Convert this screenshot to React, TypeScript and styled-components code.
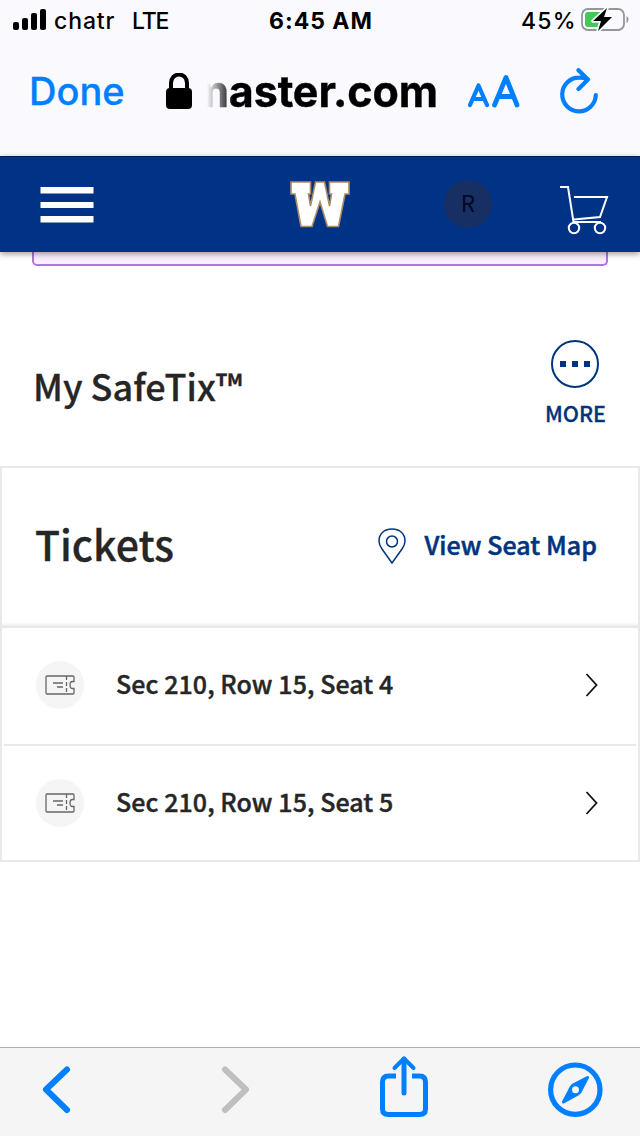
import styled, { createGlobalStyle } from "styled-components";

const GlobalStyle = createGlobalStyle`
    *{
        box-sizing:border-box;
    }
    body{
        margin:0;
        background-color:#fff;
        color:#262626;
        font-family:"Noto Sans CJK SC", "Noto Sans", sans-serif;
    }
    svg{
        display:block;
        flex-shrink:0;
    }
    button{
        border:0;
        padding:0;
        background:none;
        font:inherit;
        color:inherit;
    }
`
const Phone = styled.div`
    width:640px;
    height:1136px;
    display:flex;
    flex-direction:column;
    overflow:hidden;
`
const BrowserTop = styled.header`
    height:156px;
    flex-shrink:0;
    background-color:#faf9fd;
    color:#000;
    font-family:Inter, sans-serif;
`
const StatusBar = styled.div`
    height:40px;
    display:grid;
    grid-template-columns:1fr auto 1fr;
    align-items:center;
    padding:0 11px 2px 13px;
    font-size:23px;
    line-height:38px;
`
const StatusGroup = styled.div<{ $end?: boolean }>`
    display:flex;
    align-items:center;
    justify-content:${props => props.$end ? "flex-end" : "flex-start"};
`
const StatusText = styled.span<{ $width: number; $left?: number; $spacing?: number }>`
    width:${props => props.$width}px;
    margin-left:${props => props.$left ?? 0}px;
    padding-top:2px;
    white-space:nowrap;
    font-weight:500;
    letter-spacing:${props => props.$spacing ?? 0}px;
`
const Clock = styled.strong`
    padding-top:2px;
    font-weight:700;
    letter-spacing:1px;
`
const AddressBar = styled.div`
    height:104px;
    display:flex;
    align-items:center;
    padding:0 40px 2px 29px;
`
const Done = styled.button`
    width:96px;
    margin-right:41px;
    color:#007fff;
    font-size:38px;
    line-height:44px;
    font-weight:500;
    text-align:left;
    white-space:nowrap;
    -webkit-text-stroke:0.3px;
`
//주소가 길어서 왼쪽이 흐려지면서 잘림
const Domain = styled.div`
    width:231px;
    margin-left:15px;
    display:flex;
    justify-content:flex-end;
    overflow:hidden;
    font-size:43px;
    line-height:52px;
    font-weight:700;
    letter-spacing:-0.1px;
    white-space:nowrap;
    -webkit-text-stroke:0.4px;
    mask-image:linear-gradient(to right, transparent 0, #000 26px);
`
const AddressButton = styled.button<{ $left: number }>`
    margin-left:${props => props.$left}px;
`
const TeamBar = styled.nav`
    position:relative;
    z-index:1;
    height:96px;
    flex-shrink:0;
    display:flex;
    align-items:center;
    padding:0 31px 0 40px;
    background-color:#003385;
    border-top:1px solid #001f5c;
    box-shadow:0 2px 6px rgba(0,0,0,0.4);
`
const MenuButton = styled.button`
    margin-right:196px;
`
const CartButton = styled.button`
    margin-top:11px;
`
const Avatar = styled.div`
    width:48px;
    height:48px;
    margin:0 67px 2px 94px;
    border-radius:50%;
    background-color:#172f63;
    color:#00091c;
    font-size:22.5px;
    line-height:44px;
    text-align:center;
`
const Banner = styled.div`
    height:14px;
    flex-shrink:0;
    margin:0 32px;
    border:2px solid #af76df;
    border-top:0;
    border-radius:0 0 5px 5px;
    background-color:#faf0fd;
`
const SafeTix = styled.section`
    height:200px;
    flex-shrink:0;
    display:flex;
    justify-content:space-between;
    padding:74px 34px 0 32px;
`
const Heading = styled.h1`
    margin:19px 0 0 1px;
    font-size:36px;
    line-height:52px;
    font-weight:500;
    -webkit-text-stroke:0.3px;
`
const More = styled.button`
    display:flex;
    flex-direction:column;
    align-items:center;
    align-self:flex-start;
    color:#00347d;
    font-size:21.5px;
    line-height:32px;
    font-weight:500;
    -webkit-text-stroke:0.3px;
`
const MoreLabel = styled.span`
    margin-top:9px;
`
const TicketCard = styled.section`
    height:396px;
    flex-shrink:0;
    border:2px solid #e9e9e9;
`
const CardHeader = styled.div`
    height:160px;
    display:flex;
    align-items:center;
    justify-content:space-between;
    padding:0 41px 4px 33px;
    background:linear-gradient(to top, #e8e8e8 0, #e8e8e8 2px, #f3f3f3 3px, #fff 6px);
`
const CardTitle = styled.h2`
    margin:0 0 7px;
    font-size:41px;
    line-height:60px;
    font-weight:500;
    -webkit-text-stroke:0.3px;
`
const SeatMap = styled.button`
    display:flex;
    align-items:center;
    gap:18px;
    color:#00347d;
    font-size:25px;
    line-height:36px;
    font-weight:500;
    -webkit-text-stroke:0.5px;
`
const SeatMapLabel = styled.span`
    margin-bottom:4px;
    letter-spacing:0.05px;
`
const TicketList = styled.ul`
    margin:0 2px;
    padding:0;
    list-style:none;
`
const Ticket = styled.li`
    height:116px;
    display:flex;
    align-items:center;
    padding:0 38px 2px 32px;
    font-size:25px;
    line-height:40px;
    font-weight:500;
    &:not(:last-child){
        height:118px;
        border-bottom:2px solid #e8e8e8;
    }
`
const TicketIcon = styled.div`
    width:48px;
    height:48px;
    display:flex;
    align-items:center;
    justify-content:center;
    border-radius:50%;
    background-color:#f5f5f5;
`
const SeatName = styled.span`
    flex:1;
    margin:0 0 4px 32px;
    letter-spacing:0.07px;
    -webkit-text-stroke:0.4px;
`
const BrowserBottom = styled.footer`
    height:89px;
    flex-shrink:0;
    display:flex;
    margin-top:auto;
    padding-top:7px;
    border-top:1px solid #adb0b2;
    background-color:#f5f5f5;
`
const ToolButton = styled.button<{ $left: number }>`
    align-self:flex-start;
    margin-left:${props => props.$left}px;
`

const tickets = ["Sec 210, Row 15, Seat 4", "Sec 210, Row 15, Seat 5"];

function Signal(){
    return <svg width="34" height="22" viewBox="0 0 34 22">
        <rect x="0" y="13" width="6" height="8" rx="2"/>
        <rect x="9" y="9" width="6" height="12" rx="2"/>
        <rect x="18" y="4" width="6" height="17" rx="2"/>
        <rect x="27" y="0" width="6" height="21" rx="2"/>
    </svg>
}
function Battery(){
    return <svg width="48" height="26" viewBox="0 0 48 26">
        <rect x="1" y="2" width="42" height="21" rx="6" fill="none" stroke="#96969a" strokeWidth="1.8"/>
        <path d="M45.5 9v7q2-1 2-3.500t-2-3.500" fill="#96969a"/>
        <rect x="4" y="5" width="17" height="15" rx="3" fill="#47c65a"/>
        <path d="M26 1L12 14h8l-3 10L31 10h-8z" fill="#000" stroke="#faf9fd" strokeWidth="3.500" paintOrder="stroke" strokeLinejoin="round"/>
    </svg>
}
function Lock(){
    return <svg width="26" height="37" viewBox="0 0 26 37">
        <rect x="0" y="15" width="26" height="21" rx="4"/>
        <path d="M5 17V10a8 8.500 0 0 1 16 0v7" fill="none" stroke="#000" strokeWidth="4"/>
    </svg>
}
//글자 크기 버튼
function TextSize(){
    return <svg width="52" height="34" viewBox="0 0 52 34" fill="none" stroke="#007fff" strokeLinecap="round" strokeLinejoin="round">
        <path d="M2 31L10.500 11.500 19 31M5.500 25h10" strokeWidth="4.200"/>
        <path d="M26.500 31L38 3.500 49 31M30.500 22.500h15" strokeWidth="4.800"/>
    </svg>
}
function Reload(){
    return <svg width="40" height="46" viewBox="0 0 40 46" fill="none" stroke="#007fff" strokeWidth="4.200" strokeLinecap="round" strokeLinejoin="round">
        <path d="M27 11Q23 9.500 19 9.700A16.800 16.800 0 1 0 35.800 27"/>
        <path d="M18.500 2.200L28 11.500 18.500 21"/>
    </svg>
}
function TeamLogo(){
    return <svg width="60" height="48" viewBox="0 0 60 48">
        <path d="M1 1H20.500V13H18.500L20.500 25 25.500 1H34.500L39.500 25 41.500 13H39.500V1H59V13H55L48.500 45.500H37.500L30 21 22 45.500H11L5 13H1z" fill="#fff" stroke="#ad8d67" strokeWidth="1.600"/>
    </svg>
}
function Cart(){
    return <svg width="50" height="50" viewBox="0 0 50 50" fill="none" stroke="#fff" strokeWidth="2">
        <path d="M1 2h8l5.500 35M15 12h33l-7 20-26 2.500M14 37h28"/>
        <circle cx="15" cy="43" r="5.200"/>
        <circle cx="41" cy="43" r="5.200"/>
    </svg>
}

function App(){
    return <Phone>
        <GlobalStyle/>
        <BrowserTop>
            <StatusBar>
                <StatusGroup>
                    <Signal/>
                    <StatusText $width={62} $left={7} $spacing={0.9}>chatr</StatusText>
                    <StatusText $width={38} $left={16} $spacing={-1.2}>LTE</StatusText>
                </StatusGroup>
                <Clock>6:45 AM</Clock>
                <StatusGroup $end>
                    <StatusText $width={60} $spacing={1.2}>45%</StatusText>
                    <Battery/>
                </StatusGroup>
            </StatusBar>
            <AddressBar>
                <Done>Done</Done>
                <Lock/>
                <Domain>master.com</Domain>
                <AddressButton $left={30}><TextSize/></AddressButton>
                <AddressButton $left={40}><Reload/></AddressButton>
            </AddressBar>
        </BrowserTop>
        <TeamBar>
            <MenuButton>
                <svg width="54" height="36" viewBox="0 0 54 36" fill="#fff">
                    <path d="M0.500 0h53v6.500h-53zM0.500 15h53v6h-53zM0.500 29h53v6.500h-53z"/>
                </svg>
            </MenuButton>
            <TeamLogo/>
            <Avatar>R</Avatar>
            <CartButton><Cart/></CartButton>
        </TeamBar>
        <Banner/>
        <SafeTix>
            <Heading>My SafeTix™</Heading>
            <More>
                <svg width="48" height="48" viewBox="0 0 48 48">
                    <circle cx="24" cy="24" r="23" fill="none" stroke="#00347d" strokeWidth="2"/>
                    <path d="M9 21h6v6H9zM21 21h6v6h-6zM33 21h6v6h-6z" fill="#00347d"/>
                </svg>
                <MoreLabel>MORE</MoreLabel>
            </More>
        </SafeTix>
        <TicketCard>
            <CardHeader>
                <CardTitle>Tickets</CardTitle>
                <SeatMap>
                    <svg width="28" height="36" viewBox="0 0 28 36" fill="none" stroke="#00347d" strokeWidth="1.500">
                        <path d="M14 35L4 21Q1 17 1 13C1 5 7 1 14 1s13 4 13 12q0 4-3 8z"/>
                        <circle cx="14" cy="13.500" r="5.500"/>
                    </svg>
                    <SeatMapLabel>View Seat Map</SeatMapLabel>
                </SeatMap>
            </CardHeader>
            <TicketList>
                {tickets.map((ticket) =>(
                <Ticket key={ticket}>
                    <TicketIcon>
                        <svg width="30" height="20" viewBox="0 0 30 20" fill="none" stroke="#666" strokeWidth="1.300">
                            <path d="M2 1h26q1 0 1 1v4.500h-1.500q-2.500 0-2.500 3.500t2.500 3.500H29V18q0 1-1 1H2q-1 0-1-1V2q0-1 1-1z"/>
                            <path d="M21.500 1v18" strokeDasharray="4 2"/>
                            <path d="M8 8h10M12 12h6"/>
                        </svg>
                    </TicketIcon>
                    <SeatName>{ticket}</SeatName>
                    <svg width="13" height="24" viewBox="0 0 13 24" fill="none" stroke="#111" strokeWidth="1.800">
                        <path d="M1.500 1L11.500 12 1.500 23"/>
                    </svg>
                </Ticket>))}
            </TicketList>
        </TicketCard>
        <BrowserBottom>
            <ToolButton $left={42}>
                <svg width="30" height="70" viewBox="0 0 30 70" fill="none" stroke="#007fff" strokeWidth="6" strokeLinecap="round" strokeLinejoin="round">
                    <path d="M25 14.500L4 34.500 25 55"/>
                </svg>
            </ToolButton>
            <ToolButton $left={148}>
                <svg width="30" height="70" viewBox="0 0 30 70" fill="none" stroke="#bfbfbf" strokeWidth="6" strokeLinecap="round" strokeLinejoin="round">
                    <path d="M5 14.500L26 34.500 5 55"/>
                </svg>
            </ToolButton>
            <ToolButton $left={129}>
                <svg width="50" height="70" viewBox="0 0 50 70" fill="none" stroke="#007fff" strokeWidth="5" strokeLinecap="round" strokeLinejoin="round">
                    <path d="M17 21H9.500q-6 0-6 6v27q0 5.500 6 5.500h31q6 0 6-5.500V27q0-6-6-6H33" strokeLinecap="butt"/>
                    <path d="M25 38V4"/>
                    <path d="M15.500 13L25 3.500 34.500 13" strokeWidth="4"/>
                </svg>
            </ToolButton>
            <ToolButton $left={118}>
                <svg width="56" height="70" viewBox="0 0 56 70">
                    <circle cx="28.300" cy="34.700" r="24.700" fill="none" stroke="#007fff" strokeWidth="5.200"/>
                    <path d="M40.500 22.500L33 37 31 39 16.500 47 24 32.500 26 30z" fill="#007fff" stroke="#007fff" strokeWidth="3" strokeLinejoin="round"/>
                    <circle cx="28.500" cy="34.700" r="3.500" fill="#f5f5f5"/>
                </svg>
            </ToolButton>
        </BrowserBottom>
    </Phone>
}
export default App;
